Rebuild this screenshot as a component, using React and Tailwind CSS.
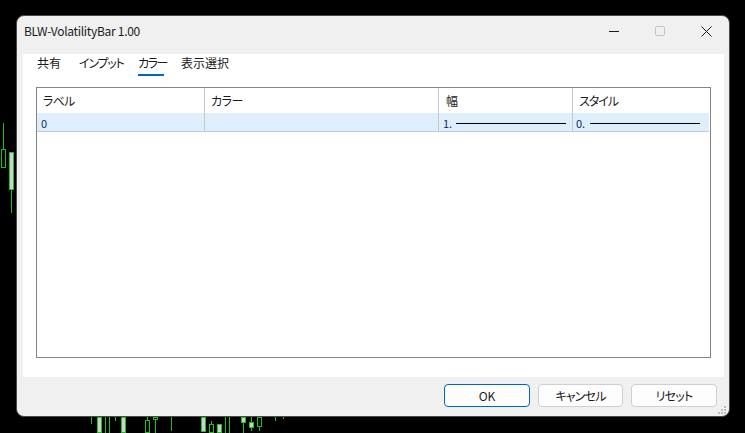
import React from "react";

// chart candles peeking out from behind the dialog: [left, top, height, kind]
const candles = [
  [3, 123, 26, "wick"],
  [1, 149, 19, "hollow"],
  [9, 152, 38, "gray"],
  [11, 189, 24, "wick"],
  [91, 417, 7, "wick"],
  [97, 417, 16, "gray"],
  [105, 417, 16, "wick"],
  [109, 417, 16, "wick"],
  [115, 417, 4, "wick"],
  [121, 417, 16, "gray"],
  [147, 417, 3, "wick"],
  [145, 420, 13, "hollow"],
  [153, 417, 3, "hollow"],
  [155, 420, 13, "wick"],
  [171, 417, 14, "wick"],
  [201, 417, 15, "gray"],
  [211, 421, 3, "wick"],
  [209, 424, 9, "hollow"],
  [217, 424, 9, "gray"],
  [225, 417, 16, "wick"],
  [229, 417, 16, "wick"],
  [243, 422, 11, "wick"],
  [241, 417, 6, "gray"],
  [251, 417, 14, "wick"],
  [249, 422, 6, "gray"],
  [259, 426, 5, "wick"],
  [257, 417, 10, "hollow"],
  [275, 417, 4, "wick"],
  [283, 417, 2, "wick"],
];

const Candle = ({ c }) => {
  const [x, y, h, kind] = c;
  if (kind === "wick") {
    return <div className="absolute w-[1px] bg-[#1fbf1f]" style={{ left: x, top: y, height: h }} />;
  }
  return (
    <div
      className={`absolute w-[5px] border border-[#1fbf1f] ${kind === "gray" ? "bg-[#cfcfcf]" : "bg-black"}`}
      style={{ left: x, top: y, height: h }}
    />
  );
};

const tabs = [
  { label: "共有", w: "w-[42px]", t: "" },
  { label: "インプット", w: "w-[59px]", t: "tracking-[-1.2px]" },
  { label: "カラー", w: "w-[43px]", t: "tracking-[-1.5px]", active: true },
  { label: "表示選択", w: "w-[60px]", t: "" },
];

export default function App() {
  return (
    <div
      className="relative w-[745px] h-[433px] bg-black overflow-hidden text-[12px] text-[#1b1b1b] [font-feature-settings:'palt']"
      style={{ fontFamily: '"Noto Sans CJK JP", "Noto Sans", sans-serif' }}
    >
      {candles.map((c, i) => (
        <Candle key={i} c={c} />
      ))}

      {/* dialog window */}
      <div className="absolute left-[16px] top-[15px] w-[714px] h-[402px] rounded-[8px] bg-[#f0f0f0] border border-[#4a4a4a] flex flex-col overflow-hidden">
        {/* title bar */}
        <div className="h-[38px] flex items-start shrink-0">
          <div className="flex-1 pl-[7px] pt-[7px] leading-[16px] text-[12px] tracking-[-0.3px] text-[#1a1a1a]">BLW-VolatilityBar 1.00</div>
          <div className="w-[46px] h-[30px] flex items-center justify-center">
            <div className="w-[10px] h-[1px] bg-[#1a1a1a]" />
          </div>
          <div className="w-[46px] h-[30px] flex items-center justify-center">
            <div className="w-[10px] h-[10px] border border-[#c4c4c4] rounded-[2px]" />
          </div>
          <div className="w-[46px] h-[30px] flex items-center justify-center">
            <svg width="11" height="11" viewBox="0 0 11 11">
              <path d="M0.5 0.5L10.5 10.5M10.5 0.5L0.5 10.5" stroke="#1a1a1a" strokeWidth="1" />
            </svg>
          </div>
        </div>

        {/* white page */}
        <div className="ml-[6px] mr-[5px] h-[323px] bg-white flex flex-col px-[13px] shrink-0">
          <div className="flex pl-[1px] mt-[1px]">
            {tabs.map((t) => (
              <div key={t.label} className={`${t.w} flex flex-col items-start`}>
                <span className={`leading-[16px] h-[16px] text-[12px] whitespace-nowrap text-[#1a1a1a] ${t.t}`}>{t.label}</span>
                <div className={`h-[2px] mt-[3px] w-[26px] ${t.active ? "bg-[#0067c0]" : "bg-transparent"}`} />
              </div>
            ))}
          </div>

          <div className="mt-[11px] mb-[19px] flex-1 border border-[#858585] flex flex-col">
            <div className="flex h-[25px] items-center">
              <div className="w-[168px] h-full border-r border-[#c8c8c8] pl-[6px] flex items-center tracking-[-0.8px]">ラベル</div>
              <div className="w-[234px] h-full border-r border-[#c8c8c8] pl-[6px] flex items-center tracking-[-0.5px]">カラー</div>
              <div className="w-[134px] h-full border-r border-[#c8c8c8] pl-[7px] flex items-center">幅</div>
              <div className="flex-1 h-full pl-[6px] flex items-center tracking-[-1px]">スタイル</div>
            </div>
            <div className="flex h-[19px] bg-[#dfeefc] border-b border-[#c8c8c8] mr-[1px] text-[11px] text-[#0c2a66]">
              <div className="w-[168px] h-full border-r border-[#c8c8c8] pl-[4px] pt-[2px] flex items-center">0</div>
              <div className="w-[234px] h-full border-r border-[#c8c8c8]" />
              <div className="w-[134px] h-full border-r border-[#c8c8c8] pl-[4px] pr-[6px] pt-[2px] flex items-center gap-[4px]">
                <span>1.</span>
                <div className="flex-1 h-[1px] bg-black" />
              </div>
              <div className="flex-1 h-full pl-[3px] pr-[9px] pt-[2px] flex items-center gap-[5px]">
                <span>0.</span>
                <div className="flex-1 h-[1px] bg-black" />
              </div>
            </div>
          </div>
        </div>

        {/* footer buttons */}
        <div className="relative flex-1 flex justify-end items-start gap-[8px] pt-[7px] pr-[12px]">
          <button className="w-[86px] h-[23px] rounded-[4px] border border-[#0067c0] bg-[#fdfdfd] text-[12px] leading-[16px] text-[#1a1a1a]">OK</button>
          <button className="w-[85px] h-[23px] rounded-[4px] border border-[#d0d0d0] bg-[#fdfdfd] text-[12px] leading-[16px] tracking-[-0.8px] text-[#1a1a1a]">キャンセル</button>
          <button className="w-[86px] h-[23px] rounded-[4px] border border-[#d0d0d0] bg-[#fdfdfd] text-[12px] leading-[16px] tracking-[-0.8px] text-[#1a1a1a]">リセット</button>
          <svg className="absolute right-[2px] bottom-[1px]" width="10" height="10" viewBox="0 0 10 10">
            <rect x="7" y="1" width="2" height="2" fill="#bdbdbd" />
            <rect x="4" y="4" width="2" height="2" fill="#bdbdbd" />
            <rect x="7" y="4" width="2" height="2" fill="#bdbdbd" />
            <rect x="1" y="7" width="2" height="2" fill="#bdbdbd" />
            <rect x="4" y="7" width="2" height="2" fill="#bdbdbd" />
            <rect x="7" y="7" width="2" height="2" fill="#bdbdbd" />
          </svg>
        </div>
      </div>
    </div>
  );
}
